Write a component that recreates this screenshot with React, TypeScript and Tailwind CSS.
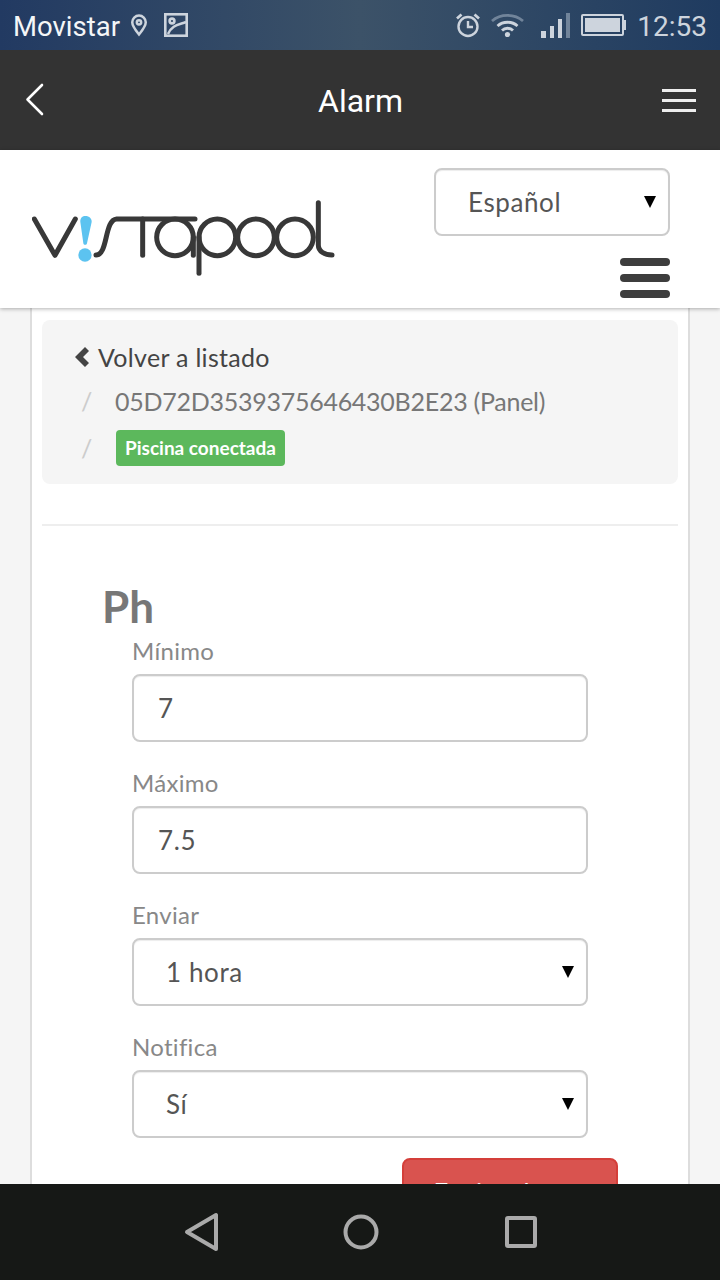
import React from 'react';

const labelClass = 'block text-[24px] leading-[34px] text-[#888] tracking-[0.3px]';
const fieldClass =
  'block w-full h-[68px] rounded-[8px] border-2 border-[#ccc] bg-white text-[26px] text-[#555] tracking-[0.6px] outline-none shadow-[inset_0_1px_1px_rgba(0,0,0,0.075)]';

const Caret = ({ className }: { className: string }) => (
  <svg className={className} width="12" height="12" viewBox="0 0 12 12" fill="#000">
    <polygon points="0,0 12,0 6,12" />
  </svg>
);

const StatusBar = () => (
  <div className="h-[50px] flex-shrink-0 flex items-center justify-between pl-[13px] pr-[13px] bg-gradient-to-r from-[#223a62] via-[#3c5268] to-[#1f3b60] font-['Roboto',sans-serif]">
    <div className="flex items-center">
      <span className="mt-[3px] text-[27.500px] text-[#f4f6f8]">Movistar</span>
      {/* location pin */}
      <svg className="ml-[10px]" width="18" height="24" viewBox="0 0 20 26" fill="none" stroke="#cdd4dd" strokeWidth="2.8">
        <path d="M10 23.500C6 18.500 2.500 14.500 2.500 10a7.500 7.500 0 0 1 15 0c0 4.500-3.500 8.500-7.500 13.500z" />
        <circle cx="10" cy="10" r="2.400" />
      </svg>
      {/* picture */}
      <svg className="ml-[16px]" width="24" height="24" viewBox="0 0 24 24" fill="none" stroke="#cdd4dd" strokeWidth="2.600">
        <rect x="1.300" y="1.300" width="21.400" height="21.400" />
        <circle cx="8" cy="8" r="2.400" />
        <path d="M4 21C8 12 14 12 22 9" />
      </svg>
    </div>
    <div className="flex items-center">
      {/* alarm */}
      <svg width="26" height="26" viewBox="0 0 26 26" fill="none" stroke="#cdd4dd" strokeWidth="2.400">
        <circle cx="13" cy="14.500" r="9.500" />
        <path d="M13 9v6h5" />
        <path d="M2 6.500 6.500 2.500M24 6.500 19.500 2.500" strokeWidth="2.800" />
      </svg>
      {/* wifi */}
      <svg className="ml-[9px]" width="35" height="26" viewBox="0 0 34 26" fill="none" strokeWidth="2.800">
        <path d="M1.500 9C10 1.500 24 1.500 32.500 9" stroke="#71849a" />
        <path d="M7 14C12.500 9 21.500 9 27 14M11.500 18.500C14.500 15.500 19.500 15.500 22.500 18.500" stroke="#cdd4dd" />
        <circle cx="17" cy="22.500" r="2.600" fill="#cdd4dd" />
      </svg>
      {/* signal */}
      <div className="ml-[16px] flex items-end gap-[4px] h-[26px]">
        <span className="w-[5px] h-[7px] bg-[#cdd4dd]" />
        <span className="w-[4px] h-[12px] bg-[#cdd4dd]" />
        <span className="w-[4px] h-[19px] bg-[#cdd4dd]" />
        <span className="w-[4px] h-[25px] bg-[#71849a]" />
      </div>
      {/* battery */}
      <div className="ml-[11px] flex items-center">
        <div className="w-[43px] h-[22px] border-2 border-[#cdd4dd] p-[2px] rounded-[2px]">
          <div className="w-full h-full bg-[#cdd4dd]" />
        </div>
        <span className="w-[2px] h-[10px] bg-[#cdd4dd]" />
      </div>
      <span className="ml-[11px] mt-[3px] text-[28px] text-[#cdd4dd]">12:53</span>
    </div>
  </div>
);

const Toolbar = () => (
  <div className="h-[100px] flex-shrink-0 flex items-center justify-between pl-[25px] pr-[24px] bg-[#333] font-['Roboto',sans-serif]">
    <div className="w-[34px]">
      <svg width="20" height="34" viewBox="0 0 20 34" fill="none" stroke="#fff" strokeWidth="2.600" strokeLinecap="round" strokeLinejoin="round">
        <path d="M17 2 2.500 16.500 17 31" />
      </svg>
    </div>
    <h1 className="mt-[2px] text-[32px] text-white">Alarm</h1>
    <div className="w-[34px] flex flex-col gap-[7px]">
      <span className="h-[3px] bg-[#eee]" />
      <span className="h-[3px] bg-[#eee]" />
      <span className="h-[3px] bg-[#eee]" />
    </div>
  </div>
);

const Logo = () => (
  <svg className="mt-[48px]" width="304" height="80" viewBox="96 144 912 240" fill="none" stroke="#383838" strokeWidth="15" strokeLinecap="round" strokeLinejoin="round">
    <path d="M103 207 165 316 226 207" />
    <path d="M288 315C325 315 312 210 350 207H585" />
    <path d="M428 207V316" />
    <circle cx="525" cy="262" r="55" />
    <path d="M580 262V316" />
    <circle cx="652" cy="262" r="55" />
    <path d="M597 262V370" />
    <circle cx="768" cy="262" r="55" />
    <circle cx="885" cy="262" r="55" />
    <path d="M955 158V285C955 305 975 315 996 315" />
    <path d="M256 198C245 198 240 206 241 216L250 280C251 286 260 286 261 280L275 216C276 206 268 198 256 198Z" fill="#5cc3f0" stroke="none" />
    <circle cx="255" cy="315" r="20" fill="#5cc3f0" stroke="none" />
  </svg>
);

const SiteHeader = () => (
  <header className="relative z-10 h-[158px] flex-shrink-0 flex justify-between bg-white pl-[32px] pr-[50px] shadow-[0_1px_4px_rgba(0,0,0,0.3)]">
    <Logo />
    <div className="pt-[18px] flex flex-col items-end">
      <div className="relative w-[236px]">
        <select className={`${fieldClass} appearance-none pl-[32px]`}>
          <option>Español</option>
        </select>
        <Caret className="absolute right-[14px] top-[28px]" />
      </div>
      <button className="mt-[22px] w-[50px] flex flex-col gap-[8px]">
        <span className="h-[8px] rounded-full bg-[#3d3d3d]" />
        <span className="h-[8px] rounded-full bg-[#3d3d3d]" />
        <span className="h-[8px] rounded-full bg-[#3d3d3d]" />
      </button>
    </div>
  </header>
);

const Breadcrumb = () => (
  <div className="h-[164px] rounded-[8px] bg-[#f5f5f5] pl-[32px] pt-[15px] text-[25px] leading-[44px] tracking-[0.3px]">
    <div className="flex items-center text-[#444]">
      <svg width="16" height="24" viewBox="0 0 16 24" fill="#444">
        <path d="M1 12 11 2 15 6 9 12 15 18 11 22Z" />
      </svg>
      <span className="ml-[8px]">Volver a listado</span>
    </div>
    <div className="flex items-center text-[#777]">
      <span className="w-[41px] pl-[7px] text-[#ccc]">/</span>
      <span className="tracking-[-0.26px]">05D72D3539375646430B2E23 (Panel)</span>
    </div>
    <div className="mt-[3px] flex items-center">
      <span className="w-[42px] pl-[7px] text-[#ccc]">/</span>
      <span className="h-[36px] px-[9px] rounded-[4px] bg-[#5cb85c] text-[19px] leading-[36px] font-bold text-white tracking-normal">
        Piscina conectada
      </span>
    </div>
  </div>
);

const Field = ({ label, value }: { label: string; value: string }) => (
  <div className="mb-[24px]">
    <label className={labelClass}>{label}</label>
    <input className={`${fieldClass} mt-[6px] px-[24px]`} defaultValue={value} />
  </div>
);

const SelectField = ({ label, value }: { label: string; value: string }) => (
  <div className="mb-[24px]">
    <label className={labelClass}>{label}</label>
    <div className="relative mt-[6px]">
      <select className={`${fieldClass} appearance-none pl-[32px]`}>
        <option>{value}</option>
      </select>
      <Caret className="absolute right-[14px] top-[28px]" />
    </div>
  </div>
);

const NavBar = () => (
  <div className="h-[96px] flex-shrink-0 grid grid-cols-[160px_160px_160px] justify-center items-center pl-[2px] bg-[#161816]">
    <svg className="justify-self-center" width="36" height="40" viewBox="0 0 36 40" fill="none" stroke="#aaa" strokeWidth="4" strokeLinejoin="round">
      <path d="M4 20 33 3V37Z" />
    </svg>
    <svg className="justify-self-center" width="36" height="36" viewBox="0 0 36 36" fill="none" stroke="#aaa" strokeWidth="4">
      <circle cx="18" cy="18" r="15.500" />
    </svg>
    <svg className="justify-self-center" width="32" height="32" viewBox="0 0 32 32" fill="none" stroke="#aaa" strokeWidth="4" strokeLinejoin="round">
      <rect x="2" y="2" width="28" height="28" rx="1" />
    </svg>
  </div>
);

export default function App() {
  return (
    <div className="w-[720px] h-[1280px] flex flex-col overflow-hidden bg-[#f5f5f5] font-['Lato','Open_Sans',sans-serif]">
      <StatusBar />
      <Toolbar />
      <SiteHeader />
      <main className="flex-1 min-h-0 overflow-hidden px-[30px]">
        <div className="h-[1000px] bg-white border-x-2 border-[#ddd] px-[10px] pt-[12px]">
          <Breadcrumb />
          <hr className="mt-[40px] border-t-2 border-[#eee]" />
          <div className="pl-[60px]">
            <h2 className="mt-[50px] text-[44px] leading-[60px] font-bold text-[#777]">Ph</h2>
            <div className="pl-[30px] w-[486px] -mt-[2px]">
              <Field label="Mínimo" value="7" />
              <Field label="Máximo" value="7.5" />
              <SelectField label="Enviar" value="1 hora" />
              <SelectField label="Notifica" value="Sí" />
            </div>
            <div className="flex justify-end w-[516px] -mt-[4px]">
              <button className="w-[216px] h-[68px] pt-[16px] pb-[18px] rounded-[8px] border-2 border-[#d43f3a] bg-[#d9534f] text-[26px] leading-[34px] text-white">
                Enviar alarma
              </button>
            </div>
          </div>
        </div>
      </main>
      <NavBar />
    </div>
  );
}
